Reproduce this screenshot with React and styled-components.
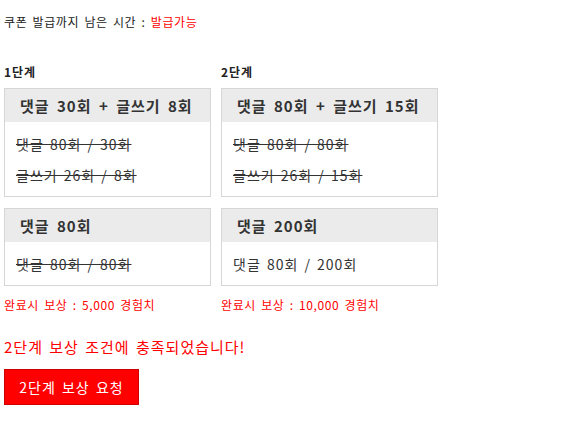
import styled, { createGlobalStyle } from 'styled-components';

const GlobalStyle = createGlobalStyle`
  body {
    margin: 0;
    background: #fff;
    font-family: 'Noto Sans CJK KR', 'Noto Sans', sans-serif;
    color: #333;
  }
`;

const Page = styled.div`
  padding: 14px 4px 20px;
`;

const Timer = styled.div`
  font-size: 12px;
  line-height: 16px;
  letter-spacing: 0.6px;
  word-spacing: 2px;
  color: #222;

  span {
    color: #f00;
  }
`;

const Stages = styled.div`
  display: grid;
  grid-template-columns: 207px 217px;
  column-gap: 10px;
  margin-top: 34px;
`;

const Stage = styled.div`
  display: flex;
  flex-direction: column;
`;

const StageLabel = styled.div`
  font-size: 12px;
  font-weight: bold;
  line-height: 16px;
  letter-spacing: 1px;
  color: #222;
  margin-bottom: 8px;
`;

const Cards = styled.div`
  display: flex;
  flex-direction: column;
  gap: 11px;
`;

const Card = styled.div`
  border: 1px solid #d6d6d6;
  background: #fff;
`;

const CardHeader = styled.div`
  background: #ebebeb;
  padding: 0 15px;
  height: 33px;
  display: flex;
  align-items: center;
  font-size: 15px;
  font-weight: bold;
  letter-spacing: 1px;
  word-spacing: 3px;
  color: #333;
  white-space: nowrap;
`;

const CardBody = styled.div`
  padding: 7px 11px 5px;
`;

const Line = styled.div`
  font-size: 14px;
  line-height: 31px;
  letter-spacing: 1px;
  word-spacing: 2px;
  color: #333;
  white-space: nowrap;
  text-decoration: ${(p) => (p.done ? 'line-through' : 'none')};
`;

const Reward = styled.div`
  margin-top: 11px;
  font-size: 12px;
  line-height: 16px;
  letter-spacing: 0.6px;
  word-spacing: 2px;
  color: #f00;
`;

const Message = styled.div`
  margin-top: 24px;
  font-size: 15px;
  line-height: 20px;
  letter-spacing: 1px;
  word-spacing: 2px;
  color: #f00;
`;

const RequestButton = styled.button`
  margin-top: 12px;
  width: 135px;
  height: 36px;
  background: #f00;
  border: 1px solid #c00;
  color: #fff;
  font-family: inherit;
  font-size: 14px;
  letter-spacing: 1px;
  word-spacing: 2px;
  cursor: pointer;
  padding: 0;
`;

const stages = [
  {
    label: '1단계',
    reward: '완료시 보상 : 5,000 경험치',
    cards: [
      {
        title: '댓글 30회 + 글쓰기 8회',
        lines: [
          { text: '댓글 80회 / 30회', done: true },
          { text: '글쓰기 26회 / 8회', done: true },
        ],
      },
      {
        title: '댓글 80회',
        lines: [{ text: '댓글 80회 / 80회', done: true }],
      },
    ],
  },
  {
    label: '2단계',
    reward: '완료시 보상 : 10,000 경험치',
    cards: [
      {
        title: '댓글 80회 + 글쓰기 15회',
        lines: [
          { text: '댓글 80회 / 80회', done: true },
          { text: '글쓰기 26회 / 15회', done: true },
        ],
      },
      {
        title: '댓글 200회',
        lines: [{ text: '댓글 80회 / 200회', done: false }],
      },
    ],
  },
];

export default function App() {
  return (
    <>
      <GlobalStyle />
      <Page>
        <Timer>
          쿠폰 발급까지 남은 시간 : <span>발급가능</span>
        </Timer>
        <Stages>
          {stages.map((stage) => (
            <Stage key={stage.label}>
              <StageLabel>{stage.label}</StageLabel>
              <Cards>
                {stage.cards.map((card) => (
                  <Card key={card.title}>
                    <CardHeader>{card.title}</CardHeader>
                    <CardBody>
                      {card.lines.map((line) => (
                        <Line key={line.text} done={line.done}>
                          {line.text}
                        </Line>
                      ))}
                    </CardBody>
                  </Card>
                ))}
              </Cards>
              <Reward>{stage.reward}</Reward>
            </Stage>
          ))}
        </Stages>
        <Message>2단계 보상 조건에 충족되었습니다!</Message>
        <RequestButton>2단계 보상 요청</RequestButton>
      </Page>
    </>
  );
}
